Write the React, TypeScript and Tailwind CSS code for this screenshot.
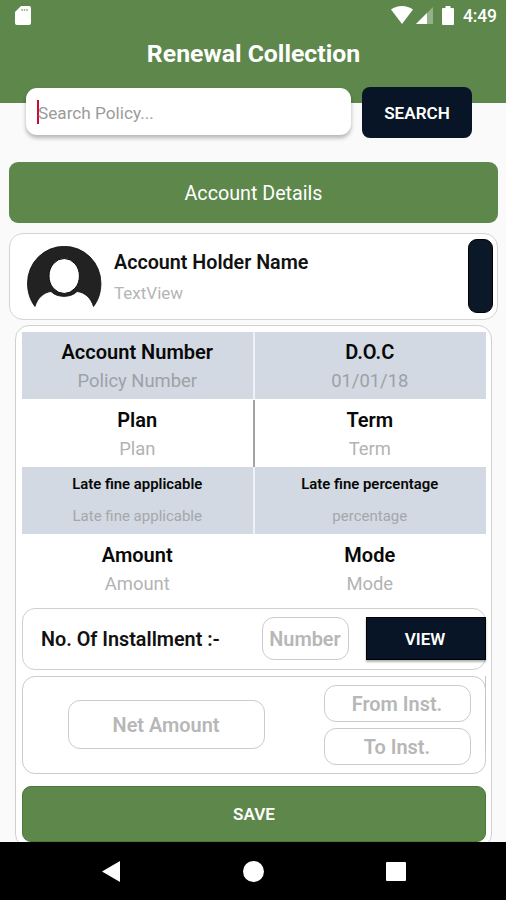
import { clsx } from "clsx";

type Field = {
  readonly label: string;
  readonly value: string;
};

type FieldRow = {
  readonly fields: readonly [Field, Field];
  readonly shaded?: boolean;
  readonly small?: boolean;
  readonly divider: string;
};

const FIELD_ROWS: readonly FieldRow[] = [
  {
    fields: [
      { label: "Account Number", value: "Policy Number" },
      { label: "D.O.C", value: "01/01/18" },
    ],
    shaded: true,
    divider: "bg-[#eef1f5]",
  },
  {
    fields: [
      { label: "Plan", value: "Plan" },
      { label: "Term", value: "Term" },
    ],
    divider: "bg-[#a3a3a3]",
  },
  {
    fields: [
      { label: "Late fine applicable", value: "Late fine applicable" },
      { label: "Late fine percentage", value: "percentage" },
    ],
    shaded: true,
    small: true,
    divider: "bg-[#eef1f5]",
  },
  {
    fields: [
      { label: "Amount", value: "Amount" },
      { label: "Mode", value: "Mode" },
    ],
    divider: "bg-white",
  },
];

function StatusBar() {
  return (
    <div className="flex h-8 items-center pl-[15px] pr-[9px]">
      <svg className="-mt-0.5 h-[19px] w-4" viewBox="0 0 16 19" aria-hidden="true">
        <path d="M6 0H14a2 2 0 0 1 2 2V17a2 2 0 0 1-2 2H2a2 2 0 0 1-2-2V6Z" fill="#fff" />
        <path d="M7 3v2M9.500 3v2M12 3v2" stroke="#9fb68f" strokeWidth="1.500" />
      </svg>
      <svg className="-mt-0.5 ml-auto h-[18px] w-[22px]" viewBox="0 0 22 18" aria-hidden="true">
        <path d="M0 3.600C6-1.200 16-1.200 22 3.600L11 18Z" fill="#fff" />
      </svg>
      <svg className="-mt-px ml-[3px] h-[17px] w-[17px]" viewBox="0 0 17 17" aria-hidden="true">
        <path d="M17 0V17H0Z" fill="#fff" opacity=".35" />
        <path d="M11 6V17H0Z" fill="#fff" />
      </svg>
      <svg className="-mt-0.5 ml-[9px] h-[19px] w-3" viewBox="0 0 12 19" aria-hidden="true">
        <path d="M3.500 0h5v2H11a1 1 0 0 1 1 1V18a1 1 0 0 1-1 1H1a1 1 0 0 1-1-1V3a1 1 0 0 1 1-1H3.500Z" fill="#fff" />
      </svg>
      <span className="ml-[9px] w-[34px] whitespace-nowrap text-[17.5px] font-medium tracking-[-0.2px] text-white">
        4:49
      </span>
    </div>
  );
}

function SearchRow() {
  return (
    <div className="-mt-4 flex pl-[26px]">
      <div className="mt-px flex h-[47px] w-[325px] items-center rounded-[11px] bg-white pl-[11px] shadow-[0_3px_4px_rgba(0,0,0,0.28)]">
        <span className="h-6 w-[2px] bg-[#c8102e]" />
        <span className="-ml-px mt-[4px] text-[17.2px] text-[#9b9b9b]">Search Policy...</span>
      </div>
      <button
        type="button"
        className="ml-[11px] h-[51px] w-[110px] rounded-[8px] bg-[#081526] pt-0.5 text-[17.1px] font-semibold text-white"
      >
        SEARCH
      </button>
    </div>
  );
}

function AccountHolder() {
  return (
    <section className="ml-[9px] mr-[8px] mt-[10px] flex h-[87px] rounded-[14px] border-[1.5px] border-[#d4d4d4] bg-white">
      <svg className="ml-[17px] mt-[12px] h-[62px] w-[75px]" viewBox="0 0 75 62" aria-hidden="true">
        <path
          d="M8 60.500C3 54 .5 46 .5 37a36.700 36.700 0 0 1 73.400 0C74 46 71.500 54 66.500 60.500C64 52 58 46.500 50 45.500C44 52 30 52 24 45.500C16.500 46.500 10.500 52 8 60.500Z"
          fill="#222"
          stroke="#0c0c0c"
          strokeWidth="0.8"
        />
        <ellipse cx="37.200" cy="30" rx="15.200" ry="17.500" fill="#fff" stroke="#0c0c0c" />
      </svg>
      <div className="ml-[11px] pt-[15px]">
        <h2 className="pl-px text-[19.7px] font-semibold leading-[27px] text-[#111]">Account Holder Name</h2>
        <p className="mt-[6px] pl-px text-[17px] leading-[22px] text-[#b5b5b5]">TextView</p>
      </div>
      <span className="ml-auto mr-[4px] mt-[5px] h-[74px] w-[25px] rounded-[9px] border border-black bg-[#0a1828]" />
    </section>
  );
}

function FieldCell({ field, small }: { readonly field: Field; readonly small?: boolean }) {
  return (
    <div className="flex-1 text-center">
      <div
        className={clsx(
          "font-semibold text-[#080808]",
          small ? "pt-[5px] text-[14.9px] leading-[25px]" : "pt-[7px] text-[20px] leading-[27px]",
        )}
      >
        {field.label}
      </div>
      <div
        className={clsx(
          small
            ? "mt-[7px] text-[15px] leading-[25px] text-[#a4a7ab]"
            : "mt-0.5 text-[18.4px] leading-[26px]",
        )}
      >
        {field.value}
      </div>
    </div>
  );
}

function FieldTable() {
  return (
    <div>
      {FIELD_ROWS.map((row) => (
        <div
          key={row.fields[0].label}
          className={clsx(
            "flex h-[67.4px] pr-px",
            row.shaded ? "bg-[#d2d9e2] text-[#9da1a8]" : "bg-white pt-px text-[#b3b3b3]",
          )}
        >
          <FieldCell field={row.fields[0]} small={row.small} />
          <span className={clsx("w-[2px]", row.divider)} />
          <FieldCell field={row.fields[1]} small={row.small} />
        </div>
      ))}
    </div>
  );
}

function HintBox({ text, className }: { readonly text: string; readonly className: string }) {
  return (
    <div
      className={clsx(
        "flex items-center justify-center whitespace-nowrap border-[1.5px] border-[#cbcbcb] bg-white pr-px pt-[3px] font-semibold text-[#b7b7b7]",
        className,
      )}
    >
      {text}
    </div>
  );
}

function NavigationBar() {
  return (
    <nav className="relative flex h-[58px] shrink-0 items-center bg-black pl-[102px]">
      <svg className="h-[21px] w-[18px]" viewBox="0 0 18 21" aria-hidden="true">
        <path d="M18 0V21L0 10.500Z" fill="#fff" />
      </svg>
      <span className="ml-[123px] h-[21px] w-[21px] rounded-full bg-white" />
      <span className="ml-[122px] h-[19px] w-5 rounded-[1px] bg-white" />
    </nav>
  );
}

export default function App() {
  return (
    <div className="flex h-[900px] w-[506px] flex-col overflow-hidden bg-[#fafafa] font-['Roboto',sans-serif]">
      <header className="h-[103px] shrink-0 bg-[#5d874b]">
        <StatusBar />
        <h1 className="pl-px pt-[4px] text-center text-[24.8px] font-bold leading-[36px] text-white">
          Renewal Collection
        </h1>
      </header>
      <SearchRow />

      <div className="ml-[9px] mr-[8px] mt-[24px] flex h-[61px] shrink-0 items-center justify-center rounded-[9px] bg-[#5d874b] pt-[3px] text-[19.7px] text-white">
        Account Details
      </div>
      <AccountHolder />

      {/* the card runs on a little under the navigation bar */}
      <main className="-mb-[6px] ml-[15px] mr-[14px] mt-[5px] flex h-[523px] shrink-0 flex-col rounded-[14px] border-[1.5px] border-[#d0d0d0] bg-white pl-[6px] pr-[5px] pt-[6px]">
        <FieldTable />

        <section className="mt-[6px] flex h-[62px] shrink-0 items-center rounded-[13px] border-[1.5px] border-[#d0d0d0] pl-[18px]">
          <span className="w-[221px] pt-[3px] text-[19.8px] font-semibold text-[#111]">
            No. Of Installment :-
          </span>
          <HintBox text="Number" className="h-[43px] w-[87px] rounded-[12px] text-[19.9px]" />
          <button
            type="button"
            className="-mr-px ml-auto h-[43px] w-[120px] border border-black bg-[#081526] pr-0.5 pt-0.5 text-[17.1px] font-semibold text-white shadow-[0_2px_2px_rgba(0,0,0,0.3)]"
          >
            VIEW
          </button>
        </section>

        <section className="relative mt-[6px] flex h-[98px] shrink-0 items-center rounded-[13px] border-[1.5px] border-[#cbcbcb] pl-[45px] pr-[14px]">
          <HintBox text="Net Amount" className="h-[49px] w-[197px] rounded-[12px] text-[19.9px]" />
          <div className="ml-auto flex flex-col gap-[6px]">
            <HintBox text="From Inst." className="h-[37px] w-[147px] rounded-[12px] text-[19.9px]" />
            <HintBox text="To Inst." className="h-[37px] w-[147px] rounded-[12px] text-[19.9px]" />
          </div>
          {/* scroll thumb */}
          <span className="absolute -right-px -top-px h-[75px] w-px bg-[#c4c4c4]" />
        </section>

        <button
          type="button"
          className="mt-[12px] h-[56px] shrink-0 rounded-[9px] border border-[#487c36] bg-[#5d874b] pt-0.5 text-[17.1px] font-semibold text-white"
        >
          SAVE
        </button>
      </main>
      <NavigationBar />
    </div>
  );
}
